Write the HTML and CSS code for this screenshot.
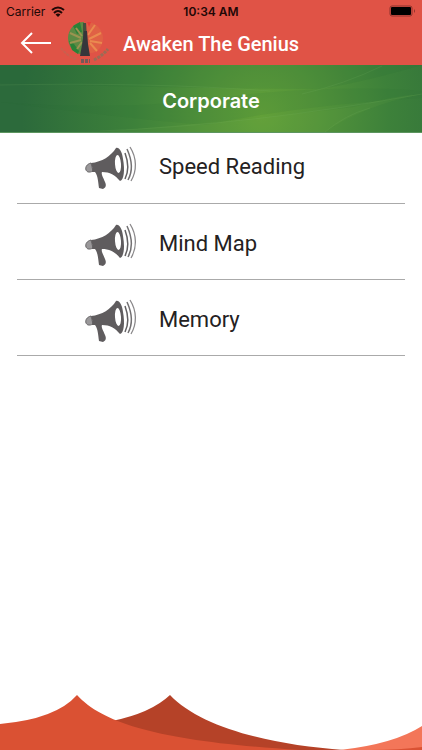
FILE: index.html
```
<!DOCTYPE html>
<html lang="en">
<head>
    <meta charset="UTF-8">
    <meta name="viewport" content="width=device-width, initial-scale=1">
    <title>Awaken The Genius</title>
    <link rel="stylesheet" href="styles.css">
</head>
<body>
    <svg class="symbols" aria-hidden="true">
        <symbol id="megaphone" viewBox="0 0 52 44">
            <path fill="#9a989a" stroke="#666466" d="M6 17 C2 18 0 21 1 24 C2 26 4 27 8 25 Z"/>
            <path fill="#5f5c5e" d="M6 17 C17 16 26 10 31 2 C34 1 37 5 38 13 C40 24 39 34 35 35 C30 29 25 26 17 26 C16 28 18 31 20 36 C22 40 20 42 18 43 L14 42 C13 35 13 30 10 26 L7 26 C8 23 7 20 6 17 Z"/>
            <ellipse cx="33" cy="18" rx="3" ry="9" fill="#fff" transform="rotate(-4 33 18)"/>
            <path fill="none" stroke="#626062" stroke-width="1.5" d="M40 7 C43 15 44 25 40 33"/>
            <path fill="none" stroke="#727072" stroke-width="1.5" d="M42 3 C47 14 48 25 43 34"/>
            <path fill="none" stroke="#8a888a" stroke-width="1.3" d="M45 1 C52 12 52 25 46 35"/>
        </symbol>
    </svg>

    <header class="header">
        <div class="status-bar">
            <div class="carrier">
                <span>Carrier</span>
                <svg width="14" height="11" viewBox="0 0 14 11" fill="none" stroke="#210806" stroke-width="2">
                    <path d="M1 4 Q7 -1 13 4"/>
                    <path d="M3 7 Q7 3 11 7"/>
                    <path d="M7 11 L4.5 8.5 Q7 6.5 9.5 8.5 Z" fill="#210806" stroke="none"/>
                </svg>
            </div>
            <div class="clock">10:34 AM</div>
            <div class="battery">
                <svg width="27" height="12" viewBox="0 0 27 12">
                    <rect x="1" y="1" width="22" height="10" rx="2" fill="none" stroke="#8d332c"/>
                    <rect x="2" y="2" width="20" height="8" rx="1" fill="#000"/>
                    <path d="M25 4 Q27 6 25 8 Z" fill="#8d332c"/>
                </svg>
            </div>
        </div>
        <div class="nav-bar">
            <button class="back" type="button" aria-label="Back">
                <svg width="32" height="24" viewBox="0 0 32 24" fill="none" stroke="#fff" stroke-width="2">
                    <path d="M31 12 H2 M12 2 L2 12 L12 22"/>
                </svg>
            </button>
            <svg class="logo" width="52" height="46" viewBox="0 0 52 46">
                <path fill="#5c8a44" d="M24 2 C14 2 8 10 8 18 C8 26 14 34 21 34 L24 22 Z"/>
                <path fill="#2b8137" d="M13 6 L20 2 L22 12 L17 14 Z M9 21 L14 24 L19 31 L18 34 L12 30 Z"/>
                <path fill="#e06145" d="M27 2 C36 2 43 10 43 18 C43 26 38 33 30 33 L27 22 Z"/>
                <g fill="none" stroke="#ea8a4f" stroke-width="2">
                    <path d="M29 19 L41 13 M30 21 L42 23 M28 15 L35 5 M30 23 L37 31"/>
                </g>
                <g fill="none" stroke="#9b9450" stroke-width="2">
                    <path d="M10 13 L21 18 M10 23 L21 20 M16 8 L22 16 M17 29 L22 22"/>
                </g>
                <path fill="#e83e3b" d="M27 2 L31 2 L29 7 Z"/>
                <path fill="#43503e" d="M23 3 L26 3 L27 20 L23 20 Z"/>
                <path fill="#36363b" d="M24 11 H27 L28 24 L30 36 H20 L22 25 Z"/>
                <path fill="none" stroke="#c8604f" stroke-width="2" stroke-dasharray="3 1" d="M1 28 Q7 36 16 39"/>
                <path fill="none" stroke="#9c6b55" stroke-width="3" stroke-dasharray="3 1" d="M34 40 Q42 36 48 29"/>
                <path fill="none" stroke="#765957" stroke-width="4" stroke-dasharray="3 1" d="M21 41 H30"/>
            </svg>
            <h1 class="app-title">Awaken The Genius</h1>
        </div>
    </header>

    <div class="banner">
        <svg class="banner-art" viewBox="0 0 422 67" preserveAspectRatio="none" aria-hidden="true">
            <path fill="#1d632f" fill-opacity=".1" d="M0 18 Q200 24 320 24 Q360 18 422 0 H0 Z"/>
            <path fill="#24672e" fill-opacity=".1" d="M0 37 Q130 48 250 29 Q350 20 422 26 V33 Q310 39 205 60 Q130 54 0 37 Z"/>
            <path fill="#75ac40" fill-opacity=".1" d="M98 67 Q270 53 354 42 Q390 31 422 29 Q365 40 325 67 Z"/>
            <path fill="none" stroke="#82b86a" stroke-opacity=".14" d="M302 29 Q345 19 382 1 M100 66 Q250 60 422 29 M0 20 Q150 17 270 26 M325 67 Q345 50 370 43"/>
        </svg>
        <h2 class="banner-title">Corporate</h2>
    </div>

    <main>
        <ul class="course-list">
            <li>
                <a class="course" href="#speed-reading">
                    <svg class="course-icon" aria-hidden="true"><use href="#megaphone"/></svg>
                    <span>Speed Reading</span>
                </a>
            </li>
            <li>
                <a class="course" href="#mind-map">
                    <svg class="course-icon" aria-hidden="true"><use href="#megaphone"/></svg>
                    <span>Mind Map</span>
                </a>
            </li>
            <li>
                <a class="course" href="#memory">
                    <svg class="course-icon" aria-hidden="true"><use href="#megaphone"/></svg>
                    <span>Memory</span>
                </a>
            </li>
        </ul>
    </main>

    <footer class="hills">
        <svg viewBox="0 0 422 56" aria-hidden="true">
            <path fill="#b54228" d="M112 27 Q151 19 170 1 C200 33 270 51 344 56 H112 Z"/>
            <path fill="#f37659" d="M340 56 Q394 50 422 32 V56 Z"/>
            <path fill="#da5133" d="M0 30 Q56 25 77 1 C105 32 170 48 300 56 H0 Z"/>
            <path fill="#da5133" d="M370 56 Q400 56 422 53 V56 Z"/>
        </svg>
    </footer>
</body>
</html>
```

FILE: styles.css
```
* {
    box-sizing: border-box;
}
body {
    display: flex;
    flex-direction: column;
    min-height: 100vh;
    margin: 0;
    background: #fff;
    font-family: Inter, "Liberation Sans", sans-serif;
}
h1, h2, ul {
    margin: 0;
    padding: 0;
}
svg {
    display: block;
}
.symbols {
    position: absolute;
    width: 0;
    height: 0;
}
.header {
    background: #e05346;
}
.status-bar {
    display: grid;
    grid-template-columns: 1fr auto 1fr;
    align-items: center;
    height: 20px;
    padding: 2px 6px 0;
    color: #210806;
    font-size: 12px;
}
.carrier {
    display: flex;
    align-items: center;
    gap: 6px;
}
.clock {
    font-weight: 600;
}
.battery {
    justify-self: end;
}
.nav-bar {
    display: flex;
    align-items: center;
    height: 45px;
    padding-left: 20px;
}
.back {
    padding: 0;
    border: 0;
    background: none;
    cursor: pointer;
}
.logo {
    margin: 0 11px 0 8px;
}
.app-title {
    padding-top: 2px;
    color: #fff;
    font: 500 20px Roboto, sans-serif;
}
.banner {
    position: relative;
    display: flex;
    align-items: center;
    justify-content: center;
    height: 68px;
    padding-top: 4px;
    border-bottom: 1px solid #5c955f;
    background: radial-gradient(circle at 62% 75%, #62a039 0, #54943a 20%, #3d813a 48%, #2c6a3b 90%);
}
.banner-art {
    position: absolute;
    top: 0;
    left: 0;
    width: 100%;
    height: 100%;
}
.banner-title {
    position: relative;
    color: #fff;
    font-size: 20px;
    font-weight: 600;
}
.course-list {
    padding: 0 17px;
    list-style: none;
}
.course {
    display: flex;
    align-items: center;
    height: 76px;
    padding: 6px 0 0 68px;
    border-bottom: 1px solid #aaa;
    color: #242122;
    font: 22px Roboto, "Liberation Sans", sans-serif;
    text-decoration: none;
}
.course span {
    padding-bottom: 3px;
}
.course-list li:first-child .course {
    height: 71px;
    padding-top: 0;
}
.course-icon {
    width: 52px;
    height: 44px;
    margin-right: 22px;
}
.hills {
    margin-top: auto;
}
.hills svg {
    width: 100%;
}
```
